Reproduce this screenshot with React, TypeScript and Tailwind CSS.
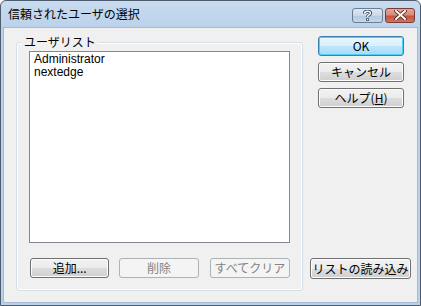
import React from "react";

const font = { fontFamily: '"Noto Sans CJK JP", "Liberation Sans", sans-serif' };

function Btn({
  children,
  className = "",
  disabled = false,
  def = false,
}: {
  children: React.ReactNode;
  className?: string;
  disabled?: boolean;
  def?: boolean;
}) {
  if (disabled) {
    return (
      <div
        className={`flex items-center justify-center rounded-[3px] border border-[#adb2b5] bg-[#f4f4f4] text-[12px] leading-none text-[#838383] ${className}`}
      >
        {children}
      </div>
    );
  }
  if (def) {
    return (
      <div
        className={`flex items-center justify-center rounded-[3px] border border-[#3c7fb1] bg-[linear-gradient(#eaf6fd_0%,#d9f0fc_50%,#bee6fd_51%,#a7d9f5_100%)] text-[12px] leading-none text-black shadow-[inset_0_0_0_1px_#4fd0f8] ${className}`}
      >
        {children}
      </div>
    );
  }
  return (
    <div
      className={`flex items-center justify-center rounded-[3px] border border-[#707070] bg-[linear-gradient(#f2f2f2_0%,#ebebeb_50%,#dddddd_51%,#cfcfcf_100%)] text-[12px] leading-none text-black shadow-[inset_0_0_0_1px_#fcfcfc] ${className}`}
    >
      {children}
    </div>
  );
}

export default function App() {
  return (
    <div className="w-[421px] h-[306px] overflow-hidden" style={font}>
      <div className="flex h-full w-full flex-col rounded-t-[6px] border border-[#4d5c6e] bg-[linear-gradient(#c8dbef,#b9d1ea_30px,#b9d1ea)]">
        {/* Title bar */}
        <div className="flex h-[26px] shrink-0 items-center pl-[7px] pr-[5px]">
          <div className="flex-1 text-[12px] leading-none text-black">信頼されたユーザの選択</div>
          <div className="mt-[2px] flex gap-[2px]">
            <div className="flex h-[15px] w-[31px] items-center justify-center rounded-[3px] border border-[#6d7d92] bg-[linear-gradient(#dde8f4_0%,#cad9ea_50%,#b4c8df_51%,#c6d7ea_100%)]">
              <svg width="9" height="11" viewBox="0 0 9 11">
                <path d="M1.5 3.5 C1.5 0.5 7.5 0.5 7.5 3.2 C7.5 5 4.5 5 4.5 7" fill="none" stroke="#2c3e55" strokeWidth="3.2" />
                <rect x="3" y="8.3" width="3" height="2.5" fill="#2c3e55" />
                <path d="M1.5 3.5 C1.5 0.5 7.5 0.5 7.5 3.2 C7.5 5 4.5 5 4.5 7" fill="none" stroke="#ffffff" strokeWidth="1.5" />
                <rect x="3.8" y="9" width="1.5" height="1.2" fill="#ffffff" />
              </svg>
            </div>
            <div className="flex h-[15px] w-[30px] items-center justify-center rounded-[3px] border border-[#7a3a35] bg-[linear-gradient(#e8a593_0%,#d98c79_45%,#c4523c_55%,#d0765f_100%)]">
              <svg width="13" height="10" viewBox="0 0 13 10">
                <path d="M2 1 L11 9 M11 1 L2 9" stroke="#3d1a14" strokeWidth="3.4" strokeLinecap="square" />
                <path d="M2 1 L11 9 M11 1 L2 9" stroke="#ffffff" strokeWidth="2" strokeLinecap="square" />
              </svg>
            </div>
          </div>
        </div>
        {/* Client area */}
        <div className="mx-[2px] mb-[3px] flex flex-1 border border-[#a5b9d0] bg-[#f0f0f0] pl-[12px] pr-[8px] pt-[8px] pb-[11px]">
          {/* Group box */}
          <div className="relative mt-[6px] flex w-[287px] flex-col rounded-[3px] border border-[#d5dfe5] px-[12px] pt-[8px] pb-[12px] shadow-[inset_0_0_0_1px_#ffffff]">
            <div className="absolute -top-[8px] left-[5px] bg-[#f0f0f0] px-[2px] text-[12px] leading-[14px] text-black">
              ユーザリスト
            </div>
            <div className="h-[192px] w-[261px] border border-[#828790] bg-white px-[4px] pt-[1px] text-[12px] leading-[13px] text-black" style={{ fontFamily: '"Liberation Sans", sans-serif' }}>
              <div>Administrator</div>
              <div>nextedge</div>
            </div>
            <div className="mt-[15px] flex pl-[1px]">
              <Btn className="h-[20px] w-[80px]">追加...</Btn>
              <Btn disabled className="ml-[10px] h-[20px] w-[80px]">削除</Btn>
              <Btn disabled className="ml-[11px] h-[20px] w-[81px]">すべてクリア</Btn>
            </div>
          </div>
          {/* Right column */}
          <div className="ml-[7px] flex flex-1 flex-col items-center justify-between pb-[12px]">
            <div className="flex flex-col gap-[6px] pl-[1px]">
              <Btn def className="h-[20px] w-[86px]">OK</Btn>
              <Btn className="h-[20px] w-[86px]">キャンセル</Btn>
              <Btn className="h-[20px] w-[86px]">ヘルプ(<span className="underline">H</span>)</Btn>
            </div>
            <Btn className="h-[21px] w-[101px]">リストの読み込み</Btn>
          </div>
        </div>
      </div>
    </div>
  );
}
